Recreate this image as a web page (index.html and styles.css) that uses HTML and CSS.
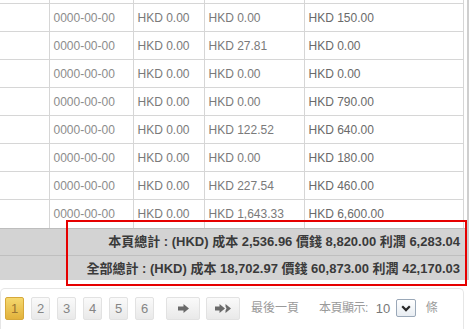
FILE: index.html
```html
<!DOCTYPE html>
<html lang="zh-Hant">
<head>
<meta charset="utf-8">
<link rel="stylesheet" href="styles.css">
</head>
<body>
<div class="page">
  <div class="grid-wrap">
    <table class="grid">
      <colgroup>
        <col class="c1"><col class="c2"><col class="c3"><col class="c4"><col class="c5">
      </colgroup>
      <tbody>
        <tr class="cut"><td></td><td></td><td></td><td></td><td></td></tr>
        <tr><td></td><td class="date">0000-00-00</td><td>HKD 0.00</td><td>HKD 0.00</td><td class="price">HKD 150.00</td></tr>
        <tr><td></td><td class="date">0000-00-00</td><td>HKD 0.00</td><td>HKD 27.81</td><td class="price">HKD 0.00</td></tr>
        <tr><td></td><td class="date">0000-00-00</td><td>HKD 0.00</td><td>HKD 0.00</td><td class="price">HKD 0.00</td></tr>
        <tr><td></td><td class="date">0000-00-00</td><td>HKD 0.00</td><td>HKD 0.00</td><td class="price">HKD 790.00</td></tr>
        <tr><td></td><td class="date">0000-00-00</td><td>HKD 0.00</td><td>HKD 122.52</td><td class="price">HKD 640.00</td></tr>
        <tr><td></td><td class="date">0000-00-00</td><td>HKD 0.00</td><td>HKD 0.00</td><td class="price">HKD 180.00</td></tr>
        <tr><td></td><td class="date">0000-00-00</td><td>HKD 0.00</td><td>HKD 227.54</td><td class="price">HKD 460.00</td></tr>
        <tr><td></td><td class="date">0000-00-00</td><td>HKD 0.00</td><td>HKD 1,643.33</td><td class="price">HKD 6,600.00</td></tr>
      </tbody>
    </table>
    <div class="totals">
      <div class="total-row">本頁總計 : (HKD) 成本 2,536.96 價錢 8,820.00 利潤 6,283.04</div>
      <div class="total-row">全部總計 : (HKD) 成本 18,702.97 價錢 60,873.00 利潤 42,170.03</div>
    </div>
  </div>

  <div class="pager">
    <span class="pg active">1</span>
    <span class="pg">2</span>
    <span class="pg">3</span>
    <span class="pg">4</span>
    <span class="pg">5</span>
    <span class="pg">6</span>
    <span class="pg arrow first-arrow">
      <svg width="11" height="9" viewBox="0 0 11 9"><path d="M0 2.5h5.5V0L11 4.5 5.5 9V6.5H0z" fill="#6a6a6a"/></svg>
    </span>
    <span class="pg arrow">
      <svg width="16" height="9" viewBox="0 0 16 9"><path d="M0 2.5h4.5V0L10 4.5 4.5 9V6.5H0z M10.5 0L16 4.5 10.5 9 10.5 6.5 11.5 4.5 10.5 2.5z" fill="#6a6a6a"/></svg>
    </span>
    <span class="last">最後一頁</span>
    <span class="show">本頁顯示:</span>
    <span class="select"><span class="sel-val">10</span><span class="sel-btn"><svg width="10" height="7" viewBox="0 0 10 7"><path d="M1.2 1.3l3.8 3.8 3.8-3.8" stroke="#2a2a2a" stroke-width="2.2" fill="none"/></svg></span></span>
    <span class="unit">條</span>
  </div>

  <div class="annot"></div>
</div>
</body>
</html>
```
FILE: styles.css
```css
* { box-sizing: border-box; }
html, body { margin: 0; padding: 0; background: #fff; }
body {
  font-family: "Liberation Sans", Tahoma, "Noto Sans CJK TC", sans-serif;
  font-size: 12px;
  width: 470px;
  height: 329px;
  overflow: hidden;
}
.page { position: relative; display: flow-root; }
.grid-wrap {
  width: 469px;
  border-right: 2px solid #cfcfcf;
  padding-right: 4px;
  margin-top: -25px;
}
.grid {
  border-collapse: collapse;
  table-layout: fixed;
  width: 463px;
}
.c1 { width: 49px; }
.c2 { width: 84px; }
.c3 { width: 71px; }
.c4 { width: 100px; }
.c5 { width: 159px; }
.grid td {
  height: 28px;
  border: 1px solid #d6d6d6;
  border-left: 0;
  padding: 1px 0 0 4px;
  color: #7a7a7a;
  white-space: nowrap;
  vertical-align: middle;
}
.grid td.date { color: #8c8c8c; }
.grid td.price { color: #6a6a6a; }
.grid tr:last-child td { border-bottom: 0; }
.totals {
  background: #d3d3d3;
  border-top: 1px solid #bdbdbd;
  margin-right: -4px;
}
.total-row {
  height: 26px;
  line-height: 26px;
  text-align: right;
  padding-right: 7px;
  font-weight: bold;
  color: #3a3a3a;
  font-size: 13px;
}
.total-row + .total-row { border-top: 1px solid #bfbfbf; height: 25px; line-height: 25px; }
.pager {
  margin-top: 8px;
  width: 464px;
  height: 50px;
  border: 1px solid #e6e6e6;
  border-bottom: 0;
  border-radius: 5px 5px 0 0;
  display: flex;
  align-items: flex-start;
  padding: 8px 0 0 4px;
  color: #999;
}
.pg {
  width: 19px;
  height: 23px;
  margin-right: 7px;
  border: 1px solid #e2e2e2;
  border-radius: 2px;
  background: linear-gradient(#fafafa, #e9e9e9);
  color: #858585;
  font-size: 13px;
  display: flex;
  align-items: center;
  justify-content: center;
}
.pg.active {
  background: linear-gradient(#f5d86e, #e2b23c);
  border-color: #d6a83a;
  color: #9a7530;
}
.pg.arrow { width: 34px; margin-right: 6px; }
.first-arrow { margin-left: 5px; }
.last {
  margin-left: 5px;
  line-height: 23px;
  font-size: 12px;
  color: #9a9a9a;
}
.show {
  margin-left: 20px;
  line-height: 23px;
  color: #9a9a9a;
  letter-spacing: -0.5px;
}
.select {
  margin-left: 3px;
  margin-top: 1px;
  height: 21px;
  display: flex;
  align-items: center;
  color: #777;
  font-size: 13px;
}
.sel-val { width: 25px; padding-left: 5px; }
.sel-btn {
  width: 20px;
  height: 18px;
  border: 1px solid #9aa8b8;
  border-radius: 2px;
  background: linear-gradient(#ffffff, #e8edf2);
  display: flex;
  align-items: center;
  justify-content: center;
}
.unit { margin-left: 10px; line-height: 23px; color: #9a9a9a; }
.annot {
  position: absolute;
  left: 66px;
  top: 220px;
  width: 401px;
  height: 66px;
  border: 2px solid #e60000;
}
```
